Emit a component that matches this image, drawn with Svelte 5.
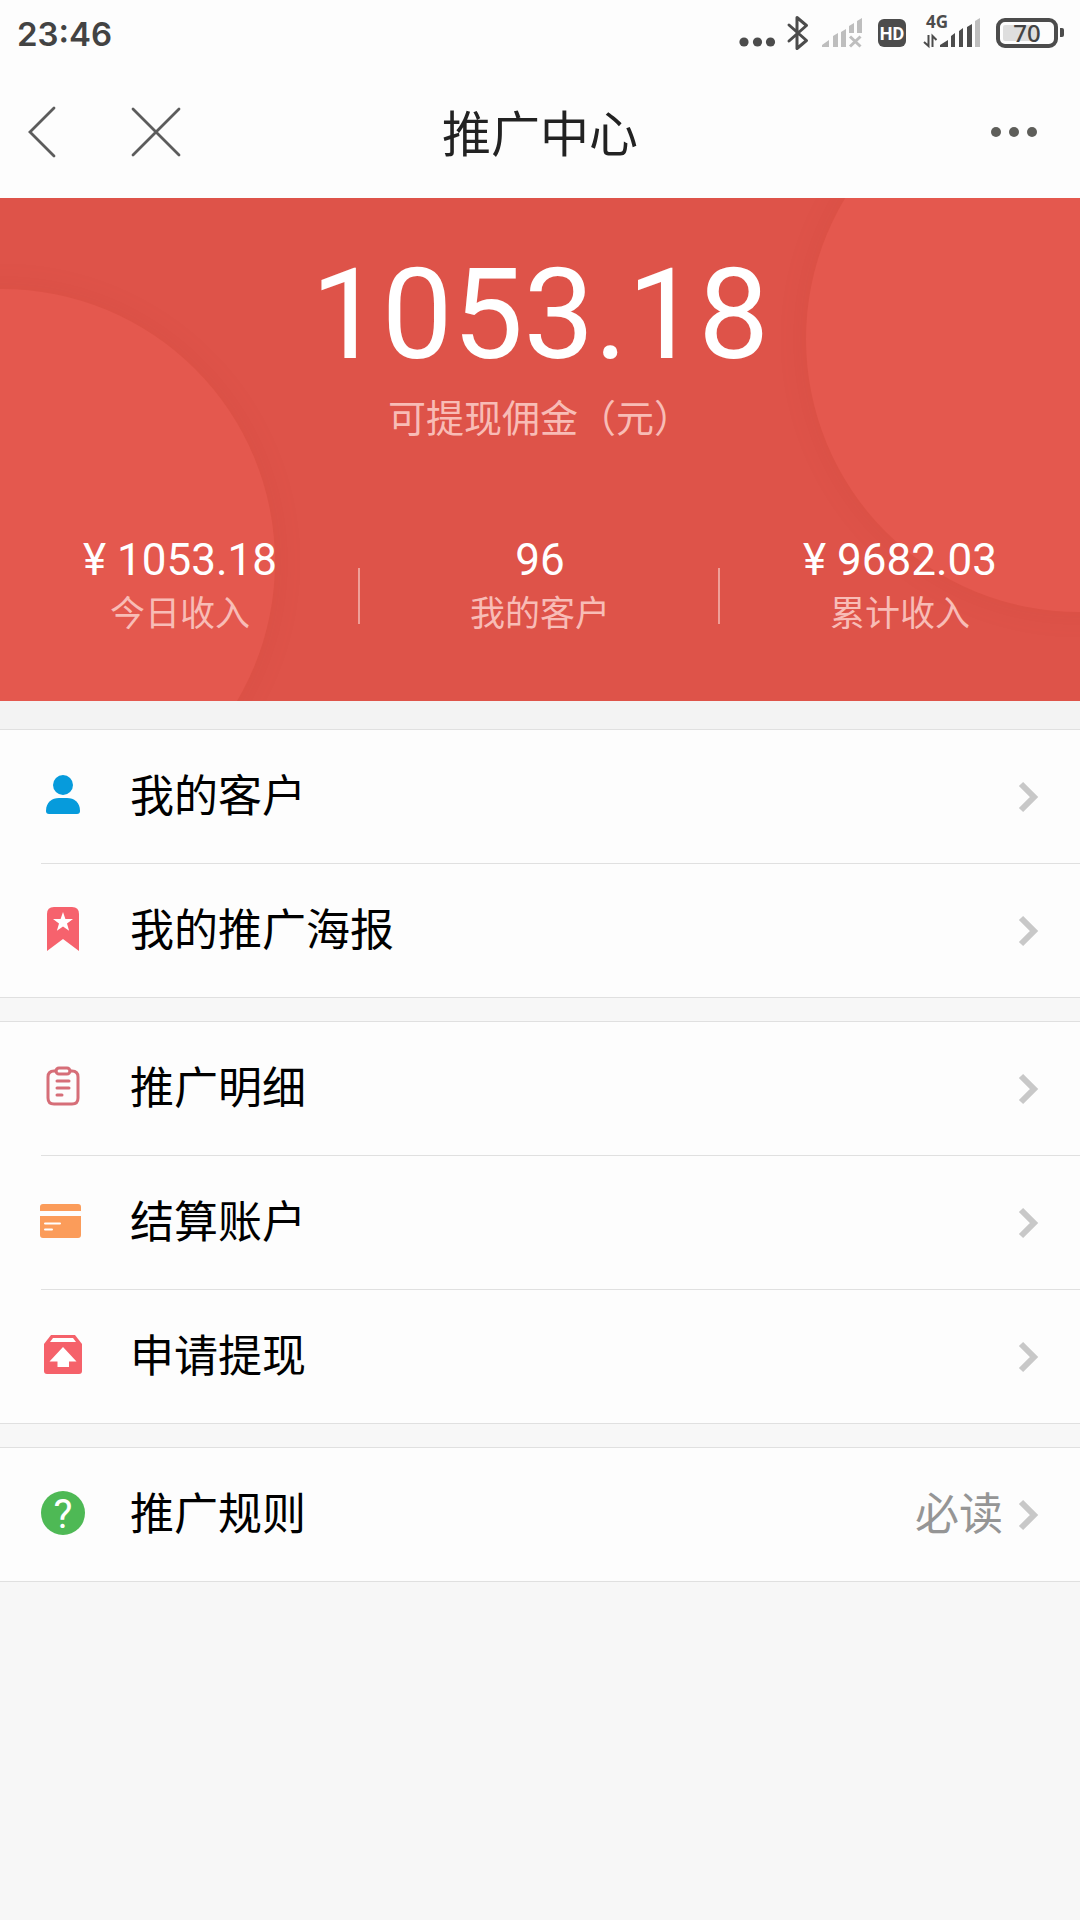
<script>
  const balance = "1053.18";

  const stats = [
    { value: "¥ 1053.18", label: "今日收入" },
    { value: "96", label: "我的客户" },
    { value: "¥ 9682.03", label: "累计收入" }
  ];

  const groups = [
    [
      { icon: "user", text: "我的客户" },
      { icon: "poster", text: "我的推广海报" }
    ],
    [
      { icon: "detail", text: "推广明细" },
      { icon: "card", text: "结算账户" },
      { icon: "withdraw", text: "申请提现" }
    ],
    [{ icon: "rule", text: "推广规则", note: "必读" }]
  ];
</script>

<svelte:head>
  <title>推广中心</title>
</svelte:head>

<div class="page">
  <div class="status">
    <span class="time">23:46</span>
    <div class="signals">
      <svg width="36" height="40" viewBox="738 14 36 40" fill="#4c4c4c">
        <circle cx="744" cy="42" r="4.6" />
        <circle cx="757.5" cy="42" r="4.6" />
        <circle cx="770.5" cy="42" r="4.6" />
      </svg>
      <svg width="20" height="40" viewBox="788 14 20 40" fill="none" stroke="#4c4c4c" stroke-width="3" stroke-linejoin="round" stroke-linecap="round">
        <path d="M789 25l17.500 15.500L797 48.500V17.500l9.500 8L789 41" />
      </svg>
      <svg width="42" height="40" viewBox="822 14 42 40">
        <path fill="#bebebe" d="M822 47v-2l7-5v7zM833 47V36l5-3v14zM841 47V32l5-3v18zM849 33v-7l5-3v10zM857 33V21l5-3v15z" />
        <path stroke="#bebebe" stroke-width="3" d="M850 36.500l10.500 10M860.500 36.500l-10.500 10" />
      </svg>
      <svg width="30" height="40" viewBox="878 14 30 40">
        <rect x="878" y="19" width="28" height="28" rx="6" fill="#4c4c4c" />
        <text x="892" y="40" class="hd">HD</text>
      </svg>
      <svg width="60" height="40" viewBox="922 14 60 40">
        <text x="926" y="28" class="net">4G</text>
        <path fill="none" stroke="#4c4c4c" stroke-width="2" d="M928.500 35v11l-4.500-4M932.500 47V36l4 4" />
        <path fill="#4c4c4c" d="M940 47v-2l8-5v7zM951 47V36l4-3v14zM959 47V31l4-3v19zM967 47V27l5-3v23z" />
        <path fill="#bebebe" d="M975 47V21l5-3v29z" />
      </svg>
      <svg width="69" height="40" viewBox="996 14 69 40">
        <rect x="998" y="20" width="58" height="26" rx="7" fill="none" stroke="#4c4c4c" stroke-width="4" />
        <rect x="1003" y="25" width="34" height="16" rx="2" fill="#dedede" />
        <path fill="#4c4c4c" d="M1060 28h2a2 2 0 0 1 2 2v5a2 2 0 0 1-2 2h-2z" />
        <text x="1027" y="42" class="battery">70</text>
      </svg>
    </div>
  </div>

  <header>
    <div class="side">
      <button aria-label="返回">
        <svg width="28" height="52" viewBox="0 0 28 52"><path d="M26 2L2 26l24 24" /></svg>
      </button>
      <button aria-label="关闭">
        <svg width="50" height="50" viewBox="0 0 50 50"><path d="M2 2l46 46M48 2L2 48" /></svg>
      </button>
    </div>
    <h1>推广中心</h1>
    <div class="side end">
      <button aria-label="更多">
        <svg class="more" width="46" height="12" viewBox="0 0 46 12">
          <circle cx="5" cy="6" r="5" />
          <circle cx="23" cy="6" r="5" />
          <circle cx="41" cy="6" r="5" />
        </svg>
      </button>
    </div>
  </header>

  <section class="hero">
    <div class="balance">{balance}</div>
    <div class="caption">可提现佣金（元）</div>
    <div class="stats">
      {#each stats as s}
        <div class="stat">
          <div class="value">{s.value}</div>
          <div class="label">{s.label}</div>
        </div>
      {/each}
    </div>
  </section>

  <nav>
    {#each groups as group}
      <ul>
        {#each group as item}
          <li>
            <a href="#{item.icon}">
              <svg class="icon" width="44" height="44" viewBox="0 0 44 44">
                {#if item.icon === "user"}
                  <circle cx="22" cy="12" r="10" fill="#069bdc" />
                  <path fill="#069bdc" d="M5 38C5 29 11 25 18 25h8c7 0 13 4 13 13 0 2-1 3-3 3H8c-2 0-3-1-3-3z" />
                {:else if item.icon === "poster"}
                  <path fill="#f6626d" d="M6 44V7q0-7 7-7h18q7 0 7 7v37L22 32z" />
                  <path fill="#fff" d="M22 5l2.400 6.900 7.600.2-6 4.500 2.100 7.200-6.100-4.200-6.100 4.200 2.100-7.200-6-4.500 7.600-.2z" />
                {:else if item.icon === "detail"}
                  <g fill="none" stroke="#d66e78" stroke-width="3" stroke-linecap="round">
                    <path d="M15 6h-2q-6 0-6 6v21q0 6 6 6h18q6 0 6-6V12q0-6-6-6h-2" />
                    <rect x="15" y="3" width="14" height="6" rx="3" />
                    <path d="M16 16h12M16 23h12M16 30h5" />
                  </g>
                {:else if item.icon === "card"}
                  <path fill="#fb9c5a" d="M-1 12V8q0-3 3-3h35q3 0 3 3v4zM-1 17h41v19q0 3-3 3H2q-3 0-3-3z" />
                  <path stroke="#fff" stroke-width="2" stroke-linecap="round" d="M4 24.500h15M4 30.500h7" />
                {:else if item.icon === "withdraw"}
                  <path fill="#f5616a" d="M10 2h24l7 9v27q0 3-3 3H6q-3 0-3-3V11z" />
                  <path fill="#fff" d="M12 5h20l3 4H9zM22 14l13.500 14.500H28V34H16.500v-5.500h-8z" />
                {:else if item.icon === "rule"}
                  <circle cx="22" cy="22" r="22" fill="#4eb955" />
                  <text x="22" y="37" class="mark">?</text>
                {/if}
              </svg>
              <span class="text">{item.text}</span>
              {#if item.note}
                <span class="note">{item.note}</span>
              {/if}
              <svg class="arrow" width="20" height="32" viewBox="0 0 20 32"><path d="M2 3l13 13L2 29" /></svg>
            </a>
          </li>
        {/each}
      </ul>
    {/each}
  </nav>
</div>

<style>
  :global(body) {
    margin: 0;
    background: #f7f7f7;
  }
  .page {
    font-family: Roboto, "Noto Sans CJK SC", sans-serif;
    color: #000;
  }
  svg {
    display: block;
    flex: none;
    overflow: visible;
  }
  .status {
    display: flex;
    justify-content: space-between;
    align-items: center;
    height: 68px;
    padding: 0 15px 0 17px;
    background: #fdfdfd;
  }
  .time {
    font-family: Inter, sans-serif;
    font-size: 33px;
    font-weight: 600;
    line-height: 40px;
    color: #434343;
  }
  .signals {
    display: flex;
    gap: 14px;
  }
  .hd {
    font: 700 18px Roboto, sans-serif;
    fill: #fff;
    text-anchor: middle;
  }
  .net {
    font: 700 17px "Noto Sans", sans-serif;
    fill: #4c4c4c;
  }
  .battery {
    font: 500 24px "Noto Sans", sans-serif;
    fill: #434343;
    text-anchor: middle;
  }
  header {
    display: flex;
    align-items: center;
    height: 128px;
    padding: 0 28px 2px;
    background: #fdfdfd;
  }
  .side {
    display: flex;
    flex: 1;
    gap: 75px;
    align-items: center;
    padding-right: 15px;
  }
  .end {
    justify-content: flex-end;
  }
  button {
    padding: 0;
    border: 0;
    background: none;
    cursor: pointer;
  }
  button path {
    fill: none;
    stroke: #5c5c5c;
    stroke-width: 2.8;
    stroke-linecap: round;
  }
  .more {
    fill: #5e5e5a;
  }
  h1 {
    margin: 0;
    padding-top: 8px;
    font-size: 49px;
    font-weight: 400;
    line-height: 60px;
    color: #222;
  }
  .hero {
    position: relative;
    overflow: hidden;
    padding: 42px 0 59px;
    background: #de5349;
    color: #fff;
    text-align: center;
  }
  /* two big soft discs behind the numbers */
  .hero::before,
  .hero::after {
    content: "";
    position: absolute;
    width: 546px;
    height: 546px;
    border-radius: 50%;
    background: #e4584e;
    box-shadow: 0 0 32px rgba(160, 40, 30, 0.08);
  }
  .hero::before {
    top: 91px;
    left: -271px;
  }
  .hero::after {
    top: -132px;
    right: -272px;
  }
  .balance,
  .caption,
  .stats {
    position: relative;
    z-index: 1;
  }
  .balance {
    font-size: 126px;
    line-height: 150px;
  }
  .caption {
    font-size: 38px;
    line-height: 58px;
    color: #f8bcb6;
  }
  .stats {
    display: grid;
    grid-template-columns: repeat(3, 1fr);
    margin-top: 84px;
  }
  .stat {
    position: relative;
  }
  .stat + .stat::before {
    content: "";
    position: absolute;
    left: -2px;
    bottom: 18px;
    width: 2px;
    height: 56px;
    background: #ef9f98;
  }
  .value {
    font-size: 44px;
    line-height: 56px;
  }
  .label {
    font-size: 35px;
    line-height: 54px;
    color: #f8bcb6;
  }
  nav {
    display: flex;
    flex-direction: column;
    gap: 23px;
    border-top: 28px solid #f3f3f3;
  }
  ul {
    margin: 0;
    padding: 0;
    list-style: none;
    background: #fdfdfd;
    border-top: 1px solid #e0e0e0;
    border-bottom: 1px solid #e0e0e0;
  }
  li {
    padding-left: 41px;
  }
  a {
    display: flex;
    align-items: center;
    height: 133px;
    padding-right: 41px;
    color: inherit;
    text-decoration: none;
  }
  li + li a {
    border-top: 1px solid #e0e0e0;
  }
  .icon {
    margin-bottom: 3px;
  }
  .text {
    flex: 1;
    margin-left: 45px;
  }
  .text,
  .note {
    font-size: 44px;
    line-height: 64px;
  }
  .note {
    margin-right: 16px;
    color: #959595;
  }
  .mark {
    font: 400 40px Roboto, sans-serif;
    fill: #fff;
    text-anchor: middle;
  }
  .arrow path {
    fill: none;
    stroke: #c8c8c8;
    stroke-width: 6;
  }
</style>
